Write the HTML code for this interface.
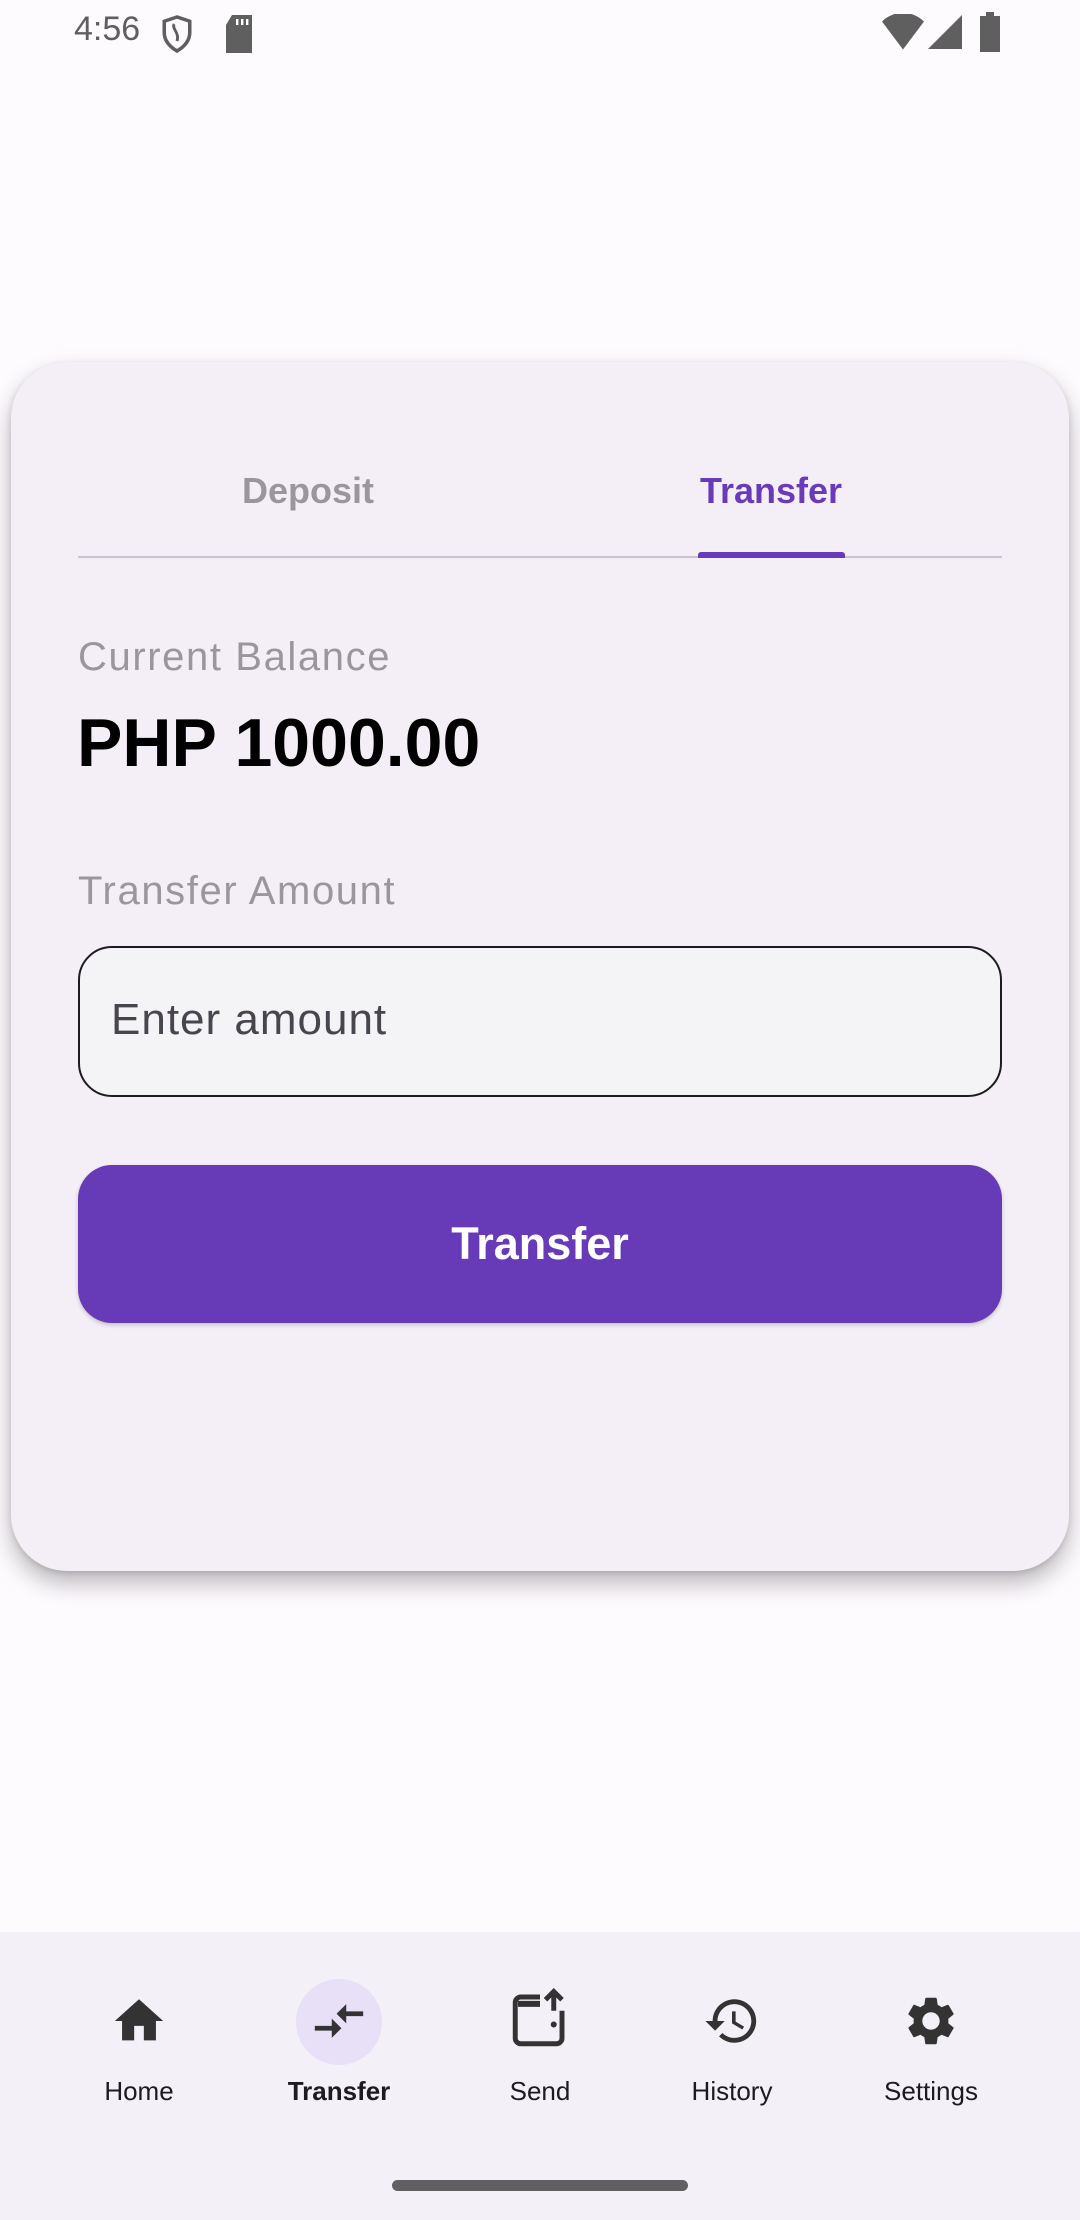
<!DOCTYPE html>
<html><head><meta charset="utf-8"><style>
*{margin:0;padding:0;box-sizing:border-box}
body{width:1080px;height:2220px;background:#fefbff;font-family:"Liberation Sans",Roboto,sans-serif;position:relative;overflow:hidden}
.abs{position:absolute}
.card{left:11px;top:362px;width:1058px;height:1209px;background:#f4eff6;border-radius:56px;box-shadow:0 12px 24px rgba(0,0,0,0.28),0 2px 6px rgba(0,0,0,0.12)}
.tab{top:470px;font-size:36px;width:300px;text-align:center;font-weight:bold}
.lbl{left:78px;font-size:40px;color:#9a979c;letter-spacing:1.6px}
.nav{left:0;top:1932px;width:1080px;height:288px;background:#f3f0f7}
.ni{position:absolute;top:1992px;width:58px;height:58px;transform:translateX(-29px)}
.nl{position:absolute;top:2076px;font-size:26px;color:#1d1b20;width:200px;text-align:center;transform:translateX(-100px)}
</style></head><body>
<div class="abs" style="left:74px;top:10px;font-size:34px;color:#5f5f5f">4:56</div>
<svg class="abs" style="left:160px;top:14px" width="34" height="40" viewBox="0 0 24 28"><path d="M12 2 3 5v8c0 6 4 10 9 13 5-3 9-7 9-13V5z" fill="none" stroke="#5f5f5f" stroke-width="2.5"/><path d="M10 7c-2 3 4 6 2 12" fill="none" stroke="#5f5f5f" stroke-width="2"/></svg>
<svg class="abs" style="left:224px;top:15px" width="30" height="38" viewBox="0 0 15 19"><path d="M4 0h10v19H1V5z" fill="#5f5f5f"/><rect x="6" y="2" width="1.2" height="3" fill="#fff"/><rect x="8.5" y="2" width="1.2" height="3" fill="#fff"/><rect x="11" y="2" width="1.2" height="3" fill="#fff"/></svg>
<svg class="abs" style="left:882px;top:14px" width="42" height="36" viewBox="0 0 24 20"><path d="M0 4a17 17 0 0 1 24 0L12 20z" fill="#5f5f5f"/></svg>
<svg class="abs" style="left:928px;top:14px" width="34" height="36" viewBox="0 0 20 20"><path d="M20 0v20H0z" fill="#5f5f5f"/></svg>
<svg class="abs" style="left:980px;top:12px" width="20" height="40" viewBox="0 0 10 20"><path d="M3 0h4v2h3v18H0V2h3z" fill="#5f5f5f"/></svg>

<div class="abs card"></div>
<div class="abs tab" style="left:158px;color:#9a979c">Deposit</div>
<div class="abs tab" style="left:621px;color:#6a3bb8">Transfer</div>
<div class="abs" style="left:78px;top:556px;width:924px;height:2px;background:#cac4d0"></div>
<div class="abs" style="left:698px;top:552px;width:147px;height:6px;background:#673ab7;border-radius:3px 3px 0 0"></div>
<div class="abs lbl" style="top:635px">Current Balance</div>
<div class="abs" style="left:77px;top:704px;font-size:68px;font-weight:bold;color:#000">PHP 1000.00</div>
<div class="abs lbl" style="top:869px">Transfer Amount</div>
<div class="abs" style="left:78px;top:946px;width:924px;height:151px;border:2px solid #1d1b20;border-radius:34px;background:#f4f3f5"></div>
<div class="abs" style="left:111px;top:995px;font-size:44px;color:#49454f;letter-spacing:1px">Enter amount</div>
<div class="abs" style="left:78px;top:1165px;width:924px;height:158px;border-radius:34px;background:#673ab7;box-shadow:0 2px 4px rgba(0,0,0,0.2);color:#fff;font-size:45px;font-weight:bold;text-align:center;line-height:158px">Transfer</div>

<div class="abs nav"></div>
<div class="abs" style="left:296px;top:1979px;width:86px;height:86px;border-radius:43px;background:#e7e0f6"></div>
<svg class="ni" style="left:139px" viewBox="0 0 24 24"><path d="M10 20v-6h4v6h5v-8h3L12 3 2 12h3v8z" fill="#333"/></svg>
<svg class="ni" style="left:339px" viewBox="0 0 24 24"><path d="M9.01 14H2v2h7.01v3L13 15l-3.99-4v3zm5.98-1v-3H22V8h-7.01V5L11 9l3.99 4z" fill="#333"/></svg>
<svg class="ni" style="left:540px;top:1986px;width:66px;height:66px;transform:translateX(-33px)" viewBox="0 0 24 24"><path d="M12 4H5a2 2 0 0 0-2 2v13a2 2 0 0 0 2 2h13a2 2 0 0 0 2-2V9" fill="none" stroke="#333" stroke-width="1.8"/><path d="M4 6.5h8" stroke="#333" stroke-width="2.2"/><path d="M17 9V2m-3 3 3-3 3 3" fill="none" stroke="#333" stroke-width="1.8"/><circle cx="17" cy="14" r="1.1" fill="#333"/></svg>
<svg class="ni" style="left:732px" viewBox="0 0 24 24"><path d="M13 3c-4.97 0-9 4.03-9 9H1l3.89 3.89.07.14L9 12H6c0-3.87 3.13-7 7-7s7 3.13 7 7-3.13 7-7 7c-1.93 0-3.68-.79-4.94-2.060l-1.42 1.42C8.27 19.99 10.51 21 13 21c4.97 0 9-4.03 9-9s-4.03-9-9-9zm-1 5v5l4.28 2.54.72-1.21-3.5-2.08V8H12z" fill="#333"/></svg>
<svg class="ni" style="left:931px" viewBox="0 0 24 24"><path d="M19.14 12.94c.04-.3.06-.61.06-.94 0-.32-.02-.64-.07-.94l2.03-1.58c.18-.14.23-.41.12-.61l-1.92-3.32c-.12-.22-.37-.29-.59-.22l-2.39.96c-.5-.38-1.03-.7-1.62-.94l-.36-2.54c-.04-.24-.24-.41-.48-.41h-3.84c-.24 0-.43.17-.47.41l-.36 2.54c-.59.24-1.13.57-1.62.94l-2.39-.96c-.22-.08-.47 0-.59.22L2.74 8.87c-.12.21-.08.47.12.61l2.03 1.58c-.05.3-.09.63-.09.94s.02.64.07.94l-2.03 1.58c-.18.14-.23.41-.12.61l1.92 3.32c.12.22.37.29.59.22l2.39-.96c.5.38 1.03.7 1.62.94l.36 2.54c.05.24.24.41.48.41h3.84c.24 0 .44-.17.47-.41l.36-2.54c.59-.24 1.13-.56 1.62-.94l2.39.96c.22.08.47 0 .59-.22l1.92-3.32c.12-.22.07-.47-.12-.61l-2.01-1.58zM12 15.6c-1.98 0-3.6-1.62-3.6-3.6s1.62-3.6 3.6-3.6 3.6 1.62 3.6 3.6-1.62 3.6-3.6 3.6z" fill="#333"/></svg>
<div class="nl" style="left:139px">Home</div>
<div class="nl" style="left:339px;font-weight:bold">Transfer</div>
<div class="nl" style="left:540px">Send</div>
<div class="nl" style="left:732px">History</div>
<div class="nl" style="left:931px">Settings</div>
<div class="abs" style="left:392px;top:2180px;width:296px;height:11px;border-radius:6px;background:#625f63"></div>
</body></html>
